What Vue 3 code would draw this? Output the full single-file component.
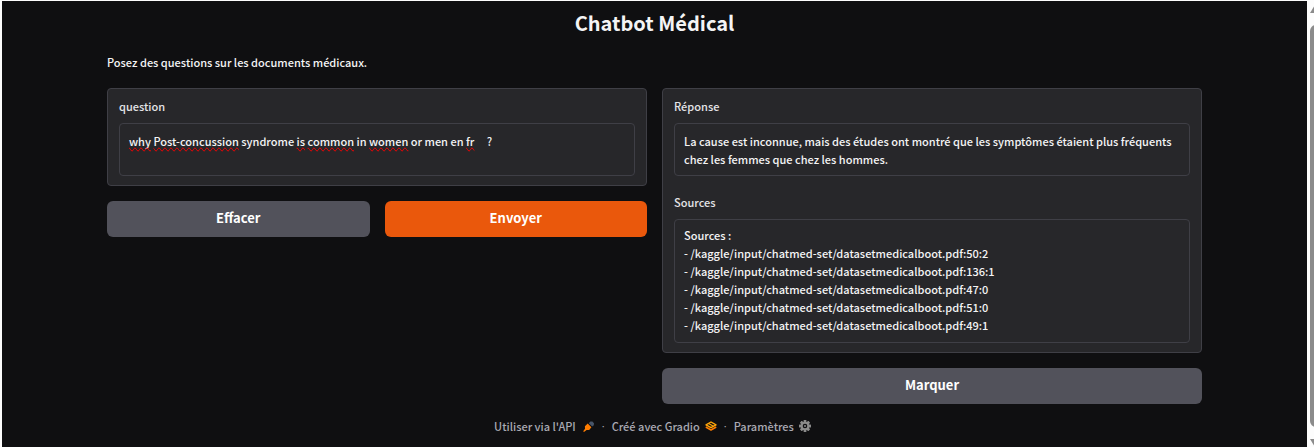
<script setup>
import { ref } from 'vue'

const question = ref('why Post-concussion syndrome is common in women or men en fr     ?')
const checked = [
  { text: 'why', bad: true }, { text: ' ' },
  { text: 'Post-concussion', bad: true }, { text: ' syndrome ' },
  { text: 'is', bad: true }, { text: ' ' },
  { text: 'common', bad: true }, { text: ' in ' },
  { text: 'women', bad: true }, { text: ' or men en ' },
  { text: 'fr', bad: true },
]
const answer = ref('La cause est inconnue, mais des études ont montré que les symptômes étaient plus fréquents chez les femmes que chez les hommes.')
const sources = ref(`Sources :
- /kaggle/input/chatmed-set/datasetmedicalboot.pdf:50:2
- /kaggle/input/chatmed-set/datasetmedicalboot.pdf:136:1
- /kaggle/input/chatmed-set/datasetmedicalboot.pdf:47:0
- /kaggle/input/chatmed-set/datasetmedicalboot.pdf:51:0
- /kaggle/input/chatmed-set/datasetmedicalboot.pdf:49:1`)
const gearAngles = [0, 45, 90, 135, 180, 225, 270, 315]
</script>

<template>
  <div class="window">
    <div class="app">
      <main class="content">
        <h1>Chatbot Médical</h1>
        <p class="intro">Posez des questions sur les documents médicaux.</p>
        <div class="columns">
          <section class="column">
            <div class="panel">
              <label class="label" for="question">question</label>
              <div class="field">
                <textarea id="question" v-model="question" class="box" rows="2" spellcheck="false"></textarea>
                <div class="marks" aria-hidden="true"><span v-for="(part, i) in checked" :key="i" :class="{ bad: part.bad }">{{ part.text }}</span></div>
              </div>
            </div>
            <div class="actions">
              <button type="button" class="button">Effacer</button>
              <button type="button" class="button primary">Envoyer</button>
            </div>
          </section>
          <section class="column">
            <div class="panel outputs">
              <div>
                <label class="label" for="answer">Réponse</label>
                <div class="field">
                  <textarea id="answer" v-model="answer" class="box" rows="2" readonly spellcheck="false"></textarea>
                </div>
              </div>
              <div>
                <label class="label" for="sources">Sources</label>
                <div class="field">
                  <textarea id="sources" v-model="sources" class="box tall" rows="6" readonly spellcheck="false"></textarea>
                </div>
              </div>
            </div>
            <div class="actions">
              <button type="button" class="button">Marquer</button>
            </div>
          </section>
        </div>
      </main>
      <footer class="footer">
        <a href="#api">Utiliser via l'API
          <svg class="icon plug" viewBox="0 0 12 12" aria-hidden="true">
            <path d="M5.8 3.2 7.4 1.6 9.4 1.6 11 3.2 10.8 5.2 9.2 6.6Z" fill="#475569" />
            <path d="M1.9 6.2 4.7 3.6 8.4 7.3 6.2 10 3.6 10 1 12 .2 11.2 2 8.8Z" fill="#ff7c00" />
          </svg>
        </a>
        <span class="dot">·</span>
        <a href="#gradio">Créé avec Gradio
          <svg class="icon" viewBox="0 0 12 12" aria-hidden="true">
            <path d="M.8 7 6 10 11.2 7" fill="none" stroke="#ff7c00" stroke-width="1.5" stroke-linejoin="round" />
            <path d="M6 2 11 4.8 6 7.6 1 4.8Z" fill="#0f0f11" stroke="#ffa60a" stroke-width="1.4" stroke-linejoin="round" />
            <path d="m3.6 3.4 4.8 2.8" stroke="#ffa60a" stroke-width="1.1" />
          </svg>
        </a>
        <span class="dot">·</span>
        <button type="button" class="settings">Paramètres
          <svg class="icon" viewBox="0 0 12 12" aria-hidden="true">
            <g fill="#8b8b8b">
              <rect v-for="a in gearAngles" :key="a" x="4.6" y="0" width="2.8" height="3" rx=".5" :transform="`rotate(${a} 6 6)`" />
            </g>
            <circle cx="6" cy="6" r="3.3" fill="none" stroke="#8b8b8b" stroke-width="2" />
            <circle cx="6" cy="6" r="1" fill="#8b8b8b" />
          </svg>
        </button>
      </footer>
    </div>
    <div class="scrollbar" aria-hidden="true">
      <svg class="arrow" viewBox="0 0 12 8"><path d="M0 8 5 0h2l5 8Z" fill="#8b8b8b" /></svg>
      <div class="thumb"></div>
      <svg class="arrow" viewBox="0 0 12 8"><path d="M0 0 5 8h2l5-8Z" fill="#8b8b8b" /></svg>
    </div>
  </div>
</template>

<style>
body {
  margin: 0;
  background: #fcfcfc;
}
</style>

<style scoped>
* {
  box-sizing: border-box;
}
.window {
  display: flex;
  gap: 3px;
  height: 100vh;
  padding: 1px 0 0 2px;
  overflow: hidden;
  font-family: "Noto Sans CJK SC", "Open Sans", sans-serif;
  font-size: 11px;
  font-weight: 500;
  line-height: 18px;
  color: #f4f4f5;
}
.app {
  flex: 1;
  min-width: 0;
  background: #0f0f11;
}
.content {
  padding: 0 105px;
}
h1 {
  margin: 0;
  padding-top: 6px;
  font-size: 20px;
  line-height: 32px;
  font-weight: 700;
  text-align: center;
}
.intro {
  margin: 14px 0 17px;
}
.columns {
  display: flex;
  align-items: flex-start;
  gap: 15px;
}
.column {
  flex: 1;
  min-width: 0;
}
.panel {
  padding: 8px 11px 9px;
  border: 1px solid #3f3f46;
  border-radius: 4px;
  background: #27272a;
}
.outputs {
  display: flex;
  flex-direction: column;
  gap: 17px;
}
.label {
  display: block;
  margin-bottom: 8px;
  color: #e4e4e7;
}
.field {
  position: relative;
}
.box {
  display: block;
  width: 100%;
  margin: 0;
  padding: 8px 9px 7px;
  border: 1px solid #3f3f46;
  border-radius: 4px;
  outline: none;
  resize: none;
  overflow: hidden;
  background: #27272a;
  color: #f4f4f5;
  font: inherit;
}
.tall {
  padding: 6px 9px 8px;
}
.marks {
  position: absolute;
  inset: 0;
  padding: 9px 10px;
  color: transparent;
  pointer-events: none;
  white-space: pre-wrap;
}
.bad {
  text-decoration-line: spelling-error;
}
.actions {
  display: flex;
  gap: 15px;
  margin-top: 15px;
}
.button {
  flex: 1;
  height: 36px;
  padding: 0 0 2px;
  border: 0;
  border-radius: 6px;
  background: #52525b;
  color: #fff;
  font: inherit;
  font-size: 13px;
  font-weight: 700;
}
.primary {
  background: #ea580c;
}
.footer {
  display: flex;
  justify-content: center;
  margin-top: 13px;
  padding-right: 4px;
  color: #a9a9b2;
}
.footer a,
.settings {
  display: flex;
  align-items: center;
  gap: 5px;
  padding: 0;
  border: 0;
  background: none;
  color: #a9a9b2;
  font: inherit;
  text-decoration: none;
}
.dot {
  margin: 0 7px;
  font-family: "Open Sans", sans-serif;
}
.icon {
  width: 12px;
  height: 12px;
}
.plug {
  margin-left: 2px;
}
.scrollbar {
  display: flex;
  flex-direction: column;
  gap: 12px;
  width: 4px;
  padding-top: 4px;
  overflow: hidden;
}
.arrow {
  flex: none;
  width: 12px;
  height: 8px;
}
.thumb {
  flex: 1;
  width: 12px;
  border-radius: 6px;
  background: #8b8b8b;
}
</style>
